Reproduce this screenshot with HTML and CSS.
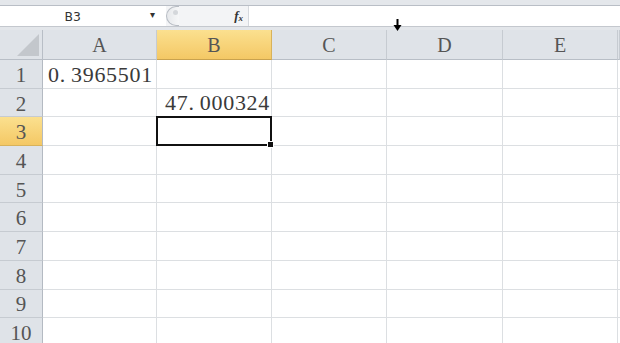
FILE: index.html
```html
<!DOCTYPE html>
<html lang="zh-CN">
<head>
  <meta charset="UTF-8">
  <title>Sheet1</title>
  <link rel="stylesheet" href="styles.css">
</head>
<body>
  <div class="top-strip"></div>

  <!-- Formula bar -->
  <div class="formula-bar">
    <div class="name-box">
      <span class="name-text">B3</span>
      <span class="drop">&#9662;</span>
    </div>
    <div class="fx-area">
      <span class="grip"><span class="dot"></span></span>
      <span class="fx">f<sub>x</sub></span>
    </div>
    <div class="formula-input"></div>
  </div>
  <div class="gap-strip"></div>

  <!-- Grid -->
  <div class="sheet">
    <div class="corner"><span class="tri"></span></div>
    <div class="col-head">A</div>
    <div class="col-head sel">B</div>
    <div class="col-head">C</div>
    <div class="col-head">D</div>
    <div class="col-head">E</div>
    <div class="col-head"></div>

    <div class="row-head">1</div>
    <div class="cell">0.&#8201;3965501</div><div class="cell"></div><div class="cell"></div><div class="cell"></div><div class="cell"></div><div class="cell"></div>

    <div class="row-head">2</div>
    <div class="cell"></div><div class="cell num">47.&#8201;000324</div><div class="cell"></div><div class="cell"></div><div class="cell"></div><div class="cell"></div>

    <div class="row-head sel">3</div>
    <div class="cell"></div><div class="cell active"></div><div class="cell"></div><div class="cell"></div><div class="cell"></div><div class="cell"></div>

    <div class="row-head">4</div>
    <div class="cell"></div><div class="cell"></div><div class="cell"></div><div class="cell"></div><div class="cell"></div><div class="cell"></div>

    <div class="row-head">5</div>
    <div class="cell"></div><div class="cell"></div><div class="cell"></div><div class="cell"></div><div class="cell"></div><div class="cell"></div>

    <div class="row-head">6</div>
    <div class="cell"></div><div class="cell"></div><div class="cell"></div><div class="cell"></div><div class="cell"></div><div class="cell"></div>

    <div class="row-head">7</div>
    <div class="cell"></div><div class="cell"></div><div class="cell"></div><div class="cell"></div><div class="cell"></div><div class="cell"></div>

    <div class="row-head">8</div>
    <div class="cell"></div><div class="cell"></div><div class="cell"></div><div class="cell"></div><div class="cell"></div><div class="cell"></div>

    <div class="row-head">9</div>
    <div class="cell"></div><div class="cell"></div><div class="cell"></div><div class="cell"></div><div class="cell"></div><div class="cell"></div>

    <div class="row-head">10</div>
    <div class="cell"></div><div class="cell"></div><div class="cell"></div><div class="cell"></div><div class="cell"></div><div class="cell"></div>
  </div>

  <!-- column select cursor -->
  <svg class="cursor" width="9" height="13" viewBox="0 0 9 13">
    <rect x="3.5" y="0" width="2" height="7" fill="#000"/>
    <path d="M0.5 6 L8.5 6 L4.5 12 Z" fill="#000"/>
  </svg>
</body>
</html>
```

FILE: styles.css
```css
/* Base */
html,
body {
  margin: 0;
  padding: 0;
  width: 620px;
  height: 343px;
  overflow: hidden;
  background: #fff;
  font-family: 'Liberation Serif', serif;
}

body {
  position: relative;
}

/* Top strip (ribbon bottom edge) */
.top-strip {
  height: 5px;
  background: #e4e7eb;
  border-bottom: 1px solid #b9bec6;
}

/* Formula bar */
.formula-bar {
  height: 20px;
  display: flex;
  background: #fff;
}

.name-box {
  width: 166px;
  display: flex;
  align-items: center;
  position: relative;
}

.name-text {
  font-family: 'DejaVu Sans', sans-serif;
  font-size: 13px;
  color: #333;
  margin-left: 64px;
  transform: scaleX(0.95);
}

.drop {
  position: absolute;
  left: 150px;
  top: 3px;
  font-size: 10px;
  color: #333;
}

.fx-area {
  width: 82px;
  display: flex;
  align-items: center;
  justify-content: space-between;
  background: #f3f4f6;
  border-right: 1px solid #d6d9de;
}

.grip {
  width: 12px;
  height: 18px;
  border: 1px solid #b8bdc4;
  border-right: none;
  border-radius: 10px 0 0 10px;
  position: relative;
  background: linear-gradient(90deg, #e6e8eb, #f6f7f8);
}

.grip .dot {
  position: absolute;
  left: 6px;
  top: 3px;
  width: 5px;
  height: 5px;
  border-radius: 50%;
  background: #d4d7db;
}

.fx {
  font-family: 'Liberation Serif', serif;
  font-style: italic;
  font-weight: bold;
  font-size: 13px;
  color: #333;
  margin-right: 5px;
}

.fx sub {
  font-size: 9px;
  vertical-align: -1px;
}

.formula-input {
  flex: 1;
  background: #fff;
}

.gap-strip {
  height: 3px;
  background: #e3e6ea;
  border-top: 1px solid #c4c8ce;
}

/* Sheet grid */
.sheet {
  display: grid;
  grid-template-columns: 43px 114px 115px 115px 116px 115px 2px;
  grid-template-rows: 30px repeat(10, 28.7px);
}

.sheet > div {
  box-sizing: border-box;
}

.corner {
  background: #dfe3e8;
  border-right: 1px solid #b8bec6;
  border-bottom: 1px solid #b8bec6;
  position: relative;
}

.corner .tri {
  position: absolute;
  right: 3px;
  bottom: 3px;
  width: 0;
  height: 0;
  border-left: 22px solid transparent;
  border-bottom: 22px solid #c3c7cc;
}

.col-head {
  background: #dfe3e8;
  border-right: 1px solid #c6cbd1;
  border-bottom: 1px solid #b8bec6;
  display: flex;
  align-items: center;
  justify-content: center;
  font-size: 20px;
  color: #555;
  padding-top: 2px;
}

.col-head.sel {
  background: linear-gradient(180deg, #fbe08f, #f4c865);
  border-right-color: #d8b25a;
  border-bottom-color: #c9a24e;
}

.row-head {
  background: #dfe3e8;
  border-right: 1px solid #b4bac2;
  border-bottom: 1px solid #c6cbd1;
  display: flex;
  align-items: center;
  justify-content: center;
  font-size: 21px;
  color: #555;
  padding-top: 3px;
}

.row-head.sel {
  background: linear-gradient(180deg, #fbe08f, #f4c865);
  border-bottom-color: #d8b25a;
}

.cell {
  border-right: 1px solid #dcdfe2;
  border-bottom: 1px solid #dcdfe2;
  font-family: 'Liberation Serif', serif;
  font-size: 22px;
  letter-spacing: 0.7px;
  color: #3a3a3a;
  display: flex;
  align-items: flex-end;
  padding: 0 1px 0 5px;
  white-space: nowrap;
}

.cell.num {
  justify-content: flex-end;
}

/* Active cell */
.cell.active {
  position: relative;
}

.cell.active::after {
  content: "";
  position: absolute;
  left: -1px;
  top: -1px;
  right: -1px;
  bottom: -1px;
  border: 2px solid #111;
}

.cell.active::before {
  content: "";
  position: absolute;
  right: -3px;
  bottom: -3px;
  width: 5px;
  height: 5px;
  background: #111;
  border: 1px solid #fff;
  z-index: 1;
}

/* Mouse cursor over column D */
.cursor {
  position: absolute;
  left: 393px;
  top: 19px;
}
```
